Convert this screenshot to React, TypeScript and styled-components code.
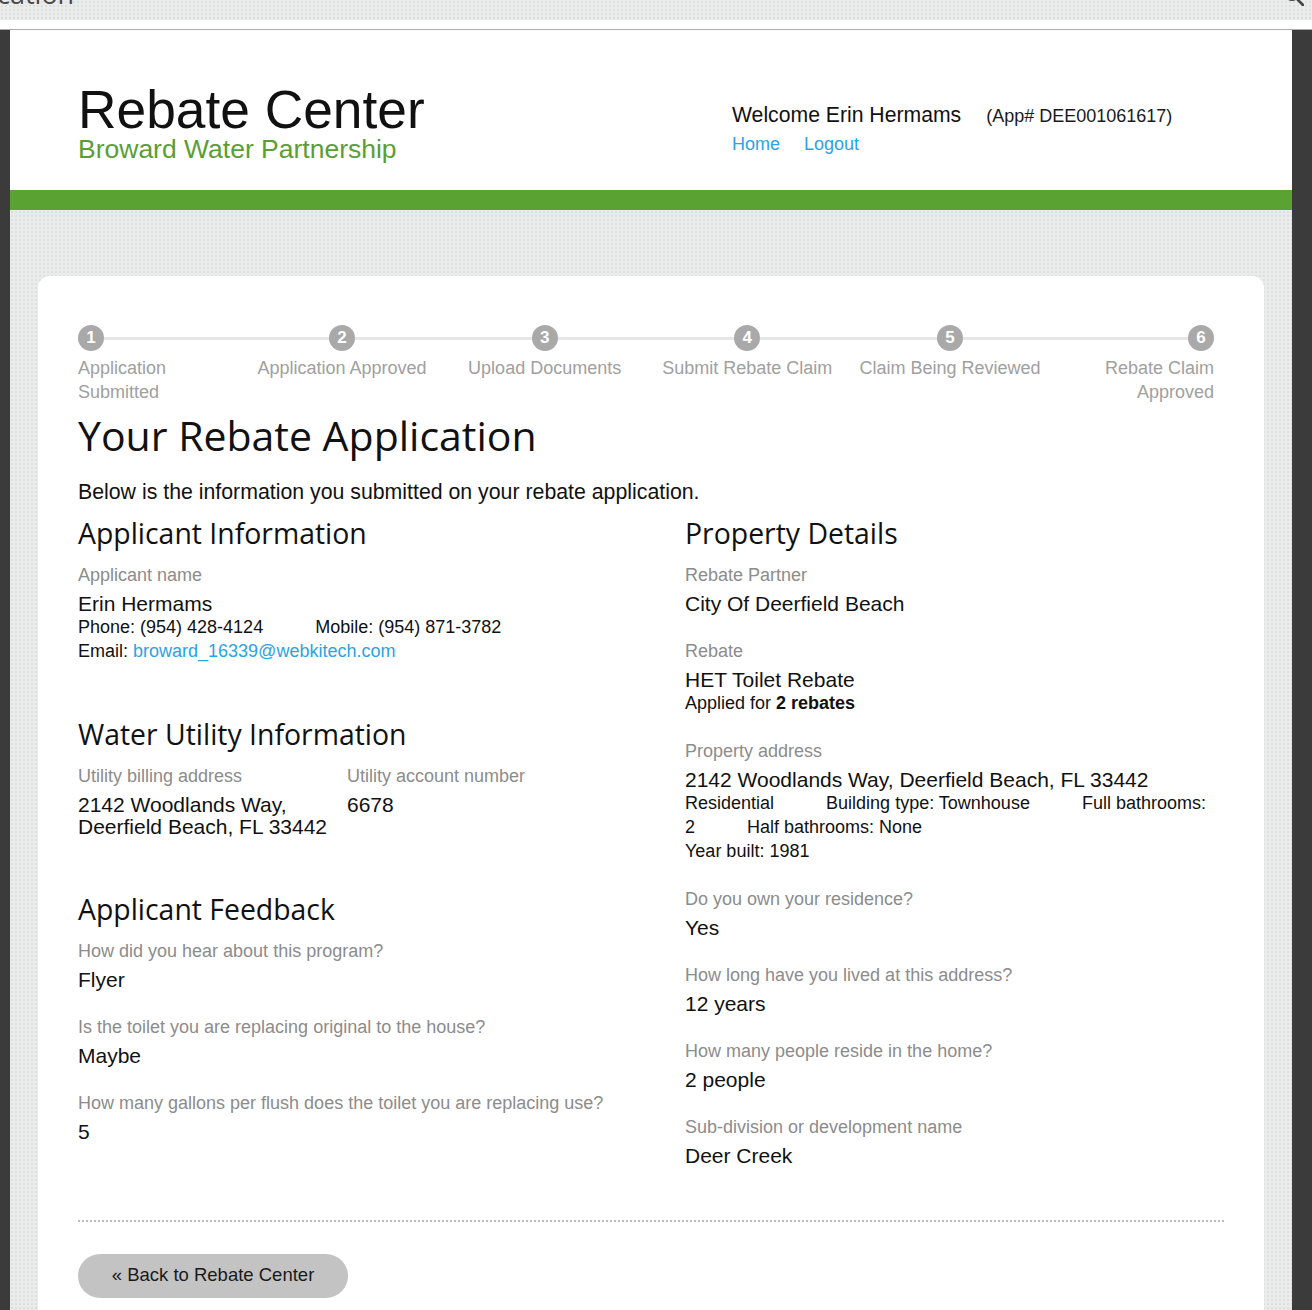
import styled, { createGlobalStyle } from "styled-components";

const GlobalStyle = createGlobalStyle`
  html, body {
    margin: 0;
    padding: 0;
    background: #fff;
  }
  body {
    font-family: "Liberation Sans", Arial, sans-serif;
    color: #111;
  }
  * {
    box-sizing: border-box;
  }
`;

const dotted = `
  background-color: #eaeceb;
  background-image: radial-gradient(circle, #d5d8d7 0.6px, transparent 0.9px);
  background-size: 4px 4px;
`;

const Page = styled.div`
  height: 1310px;
  overflow: hidden;
`;

const TopStrip = styled.div`
  ${dotted}
  height: 20px;
  display: flex;
  justify-content: space-between;
  overflow: hidden;
`;

const TabTitle = styled.span`
  font-family: "Open Sans", sans-serif;
  font-size: 27px;
  line-height: 27px;
  margin-top: -20px;
  margin-left: -3px;
  color: #4a4a4a;
`;

const SearchIcon = styled.svg`
  margin-top: -14px;
  margin-right: 8px;
  flex-shrink: 0;
`;

const TopGap = styled.div`
  height: 10px;
  border-bottom: 1px solid #ababab;
`;

const Frame = styled.div`
  display: flex;
`;

const SideBar = styled.div<{ $w: number }>`
  width: ${p => p.$w}px;
  flex-shrink: 0;
  background: #3b3b3b;
`;

const Main = styled.div`
  flex: 1;
`;

const Header = styled.header`
  height: 160px;
  background: #fff;
  display: flex;
  padding: 53px 0 0 68px;
`;

const Logo = styled.div`
  width: 654px;
`;

const Title = styled.div`
  font-size: 53.3px;
  line-height: 53px;
  color: #111;
`;

const Subtitle = styled.div`
  font-size: 26.5px;
  line-height: 26px;
  color: #5a9e34;
`;

const Welcome = styled.div`
  margin-top: 19px;
`;

const WelcomeLine = styled.div`
  font-size: 21.2px;
  line-height: 25px;
  color: #111;
`;

const AppNo = styled.span`
  font-size: 18px;
  margin-left: 25px;
  color: #1a1a1a;
`;

const NavLinks = styled.div`
  display: flex;
  gap: 24px;
  margin-top: 3px;
`;

const NavLink = styled.a`
  font-size: 18px;
  line-height: 24px;
  color: #2ba3e3;
  text-decoration: none;
`;

const GreenBar = styled.div`
  height: 20px;
  background: #5aa232;
`;

const Body = styled.div`
  ${dotted}
  padding: 66px 28px 0;
`;

const Card = styled.main`
  background: #fff;
  border-radius: 12px 12px 0 0;
  padding: 49px 40px 60px;
`;

const Steps = styled.ol`
  list-style: none;
  padding: 0;
  margin: 0 -30px 0 -40px;
  display: grid;
  grid-template-columns: repeat(6, 1fr);
`;

type Pos = "first" | "middle" | "last";

const Step = styled.li<{ $pos: Pos }>`
  padding-left: ${p => (p.$pos === "first" ? 40 : 0)}px;
  padding-right: ${p => (p.$pos === "last" ? 40 : 0)}px;
  text-align: ${p => (p.$pos === "first" ? "left" : p.$pos === "last" ? "right" : "center")};
`;

const Track = styled.div`
  display: flex;
  align-items: center;
  height: 26px;
`;

const Segment = styled.div`
  flex: 1;
  height: 3px;
  background: #e6e6e6;
`;

const Circle = styled.div`
  width: 26px;
  height: 26px;
  border-radius: 50%;
  background: #a9a9a9;
  color: #fff;
  font-size: 17px;
  font-weight: bold;
  display: flex;
  align-items: center;
  justify-content: center;
  flex-shrink: 0;
`;

const StepLabel = styled.div<{ $pos: Pos }>`
  margin-top: 5px;
  font-size: 18px;
  line-height: 24px;
  color: #a0a0a0;
  max-width: ${p => (p.$pos === "middle" ? "none" : "125px")};
  margin-left: ${p => (p.$pos === "last" ? "auto" : "0")};
`;

const PageTitle = styled.h1`
  font-family: "Open Sans", sans-serif;
  font-weight: 400;
  font-size: 41px;
  line-height: 49px;
  margin: 7px 0 0;
  color: #111;
`;

const Intro = styled.p`
  font-size: 21.3px;
  line-height: 25px;
  margin: 20px 0 0;
`;

const Columns = styled.div`
  display: grid;
  grid-template-columns: 607px 525px;
  margin-top: 11px;
`;

const Section = styled.section`
  margin-bottom: 54px;
  &:last-child {
    margin-bottom: 0;
  }
`;

const SectionTitle = styled.h2`
  font-family: "Open Sans", sans-serif;
  font-weight: 400;
  font-size: 28.4px;
  line-height: 34px;
  margin: 0 0 15px;
  color: #111;
`;

const Field = styled.div`
  margin-bottom: 26px;
  &:last-child {
    margin-bottom: 0;
  }
`;

const Label = styled.div`
  font-size: 18px;
  line-height: 21px;
  color: #8c8c8c;
`;

const Value = styled.div`
  font-size: 21px;
  line-height: 22px;
  margin-top: 7px;
  color: #111;
`;

const Detail = styled.div`
  font-size: 18px;
  line-height: 24px;
  color: #111;
`;

const Gap = styled.span`
  margin-right: 47px;
`;

const Mobile = styled.span`
  margin-left: 52px;
`;

const Link = styled.a`
  color: #2ba3e3;
  text-decoration: none;
`;

const Pair = styled.div`
  display: grid;
  grid-template-columns: 269px auto;
  & > ${Field} {
    margin-bottom: 0;
  }
`;

const Divider = styled.hr`
  margin: 53px 0 0;
  border: none;
  border-top: 2px dotted #bdbdbd;
`;

const BackButton = styled.button`
  margin-top: 32px;
  width: 270px;
  height: 44px;
  border: none;
  border-radius: 22px;
  background: #c3c3c3;
  font-family: "Liberation Sans", Arial, sans-serif;
  font-size: 18.5px;
  color: #1a1a1a;
  display: flex;
  align-items: center;
  justify-content: center;
  padding: 0 0 2px;
`;

const steps = [
  "Application Submitted",
  "Application Approved",
  "Upload Documents",
  "Submit Rebate Claim",
  "Claim Being Reviewed",
  "Rebate Claim Approved",
];

const App = () => {
  return (
    <Page>
      <GlobalStyle />
      <TopStrip>
        <TabTitle>cation</TabTitle>
        <SearchIcon width="20" height="20" viewBox="0 0 20 20">
          <circle cx="8" cy="8" r="6" fill="none" stroke="#444" strokeWidth="2.2" />
          <line x1="12.5" y1="12.5" x2="19" y2="19" stroke="#444" strokeWidth="2.6" strokeLinecap="round" />
        </SearchIcon>
      </TopStrip>
      <TopGap />
      <Frame>
        <SideBar $w={10} />
        <Main>
          <Header>
            <Logo>
              <Title>Rebate Center</Title>
              <Subtitle>Broward Water Partnership</Subtitle>
            </Logo>
            <Welcome>
              <WelcomeLine>
                Welcome Erin Hermams<AppNo>(App# DEE001061617)</AppNo>
              </WelcomeLine>
              <NavLinks>
                <NavLink href="#">Home</NavLink>
                <NavLink href="#">Logout</NavLink>
              </NavLinks>
            </Welcome>
          </Header>
          <GreenBar />
          <Body>
            <Card>
              <Steps>
                {steps.map((s, i) => {
                  const pos: Pos = i === 0 ? "first" : i === steps.length - 1 ? "last" : "middle";
                  return (
                    <Step key={s} $pos={pos}>
                      <Track>
                        {pos !== "first" && <Segment />}
                        <Circle>{i + 1}</Circle>
                        {pos !== "last" && <Segment />}
                      </Track>
                      <StepLabel $pos={pos}>{s}</StepLabel>
                    </Step>
                  );
                })}
              </Steps>

              <PageTitle>Your Rebate Application</PageTitle>
              <Intro>Below is the information you submitted on your rebate application.</Intro>

              <Columns>
                <div>
                  <Section>
                    <SectionTitle>Applicant Information</SectionTitle>
                    <Field>
                      <Label>Applicant name</Label>
                      <Value>Erin Hermams</Value>
                      <Detail>
                        Phone: (954) 428-4124
                        <Mobile>Mobile: (954) 871-3782</Mobile>
                      </Detail>
                      <Detail>
                        Email: <Link href="#">broward_16339@webkitech.com</Link>
                      </Detail>
                    </Field>
                  </Section>

                  <Section>
                    <SectionTitle>Water Utility Information</SectionTitle>
                    <Pair>
                      <Field>
                        <Label>Utility billing address</Label>
                        <Value>
                          2142 Woodlands Way,
                          <br />
                          Deerfield Beach, FL 33442
                        </Value>
                      </Field>
                      <Field>
                        <Label>Utility account number</Label>
                        <Value>6678</Value>
                      </Field>
                    </Pair>
                  </Section>

                  <Section>
                    <SectionTitle>Applicant Feedback</SectionTitle>
                    <Field>
                      <Label>How did you hear about this program?</Label>
                      <Value>Flyer</Value>
                    </Field>
                    <Field>
                      <Label>Is the toilet you are replacing original to the house?</Label>
                      <Value>Maybe</Value>
                    </Field>
                    <Field>
                      <Label>How many gallons per flush does the toilet you are replacing use?</Label>
                      <Value>5</Value>
                    </Field>
                  </Section>
                </div>

                <div>
                  <Section>
                    <SectionTitle>Property Details</SectionTitle>
                    <Field>
                      <Label>Rebate Partner</Label>
                      <Value>City Of Deerfield Beach</Value>
                    </Field>
                    <Field>
                      <Label>Rebate</Label>
                      <Value>HET Toilet Rebate</Value>
                      <Detail>
                        Applied for <b>2 rebates</b>
                      </Detail>
                    </Field>
                    <Field>
                      <Label>Property address</Label>
                      <Value>2142 Woodlands Way, Deerfield Beach, FL 33442</Value>
                      <Detail>
                        <Gap>Residential</Gap> <Gap>Building type: Townhouse</Gap>{" "}
                        <Gap>Full bathrooms: 2</Gap> <Gap>Half bathrooms: None</Gap>
                      </Detail>
                      <Detail>Year built: 1981</Detail>
                    </Field>
                    <Field>
                      <Label>Do you own your residence?</Label>
                      <Value>Yes</Value>
                    </Field>
                    <Field>
                      <Label>How long have you lived at this address?</Label>
                      <Value>12 years</Value>
                    </Field>
                    <Field>
                      <Label>How many people reside in the home?</Label>
                      <Value>2 people</Value>
                    </Field>
                    <Field>
                      <Label>Sub-division or development name</Label>
                      <Value>Deer Creek</Value>
                    </Field>
                  </Section>
                </div>
              </Columns>

              <Divider />
              <BackButton>« Back to Rebate Center</BackButton>
            </Card>
          </Body>
        </Main>
        <SideBar $w={20} />
      </Frame>
    </Page>
  );
};

export default App;
